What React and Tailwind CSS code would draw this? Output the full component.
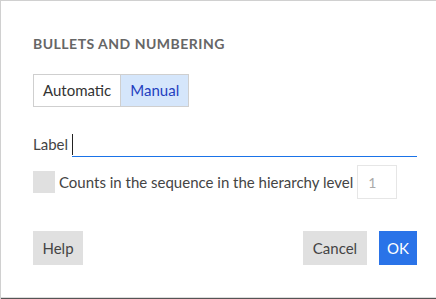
export default function App() {
  return (
    <div
      className="w-[436px] h-[299px] bg-white border-l border-t border-[#d0d0d0] overflow-hidden"
      style={{ fontFamily: 'Lato, "Noto Sans", sans-serif' }}
    >
      <div className="h-[297px] border-b border-[#dcdcdc] shadow-[0_1px_0_#555] pl-[32px] pr-[19px] flex flex-col">
        <h1 className="mt-[33px] text-[14px] leading-[20px] font-bold tracking-[0.035em] text-[#666]">
          BULLETS AND NUMBERING
        </h1>

        {/* mode toggle */}
        <div className="mt-[20px] flex self-start border border-[#cfcfcf] h-[33px] text-[15px]">
          <button className="px-[9px] text-[#333] bg-white">Automatic</button>
          <button className="px-[9px] text-[#1f3fbf] bg-[#d5e6fb] border-l border-[#cfcfcf]">Manual</button>
        </div>

        {/* label input */}
        <div className="mt-[26px] flex items-end h-[24px]">
          <span className="text-[15px] text-[#444] leading-[20px] pb-[3px] mr-[4px]">Label</span>
          <div className="flex-1 h-[24px] border-b border-[#1a73e8] flex items-stretch">
            <span className="w-px bg-[#222] my-[1px]" />
          </div>
        </div>

        {/* counts row */}
        <div className="mt-[8px] flex items-center h-[34px]">
          <span className="w-[22px] h-[22px] bg-[#e0e0e0]" />
          <span className="ml-[4px] text-[15px] text-[#444]">
            Counts in the sequence in the hierarchy level
          </span>
          <span className="ml-[4px] w-[40px] h-[34px] border border-[#e6e6e6] text-[14px] text-[#aaa] pl-[10px] flex items-center">
            1
          </span>
        </div>

        {/* buttons */}
        <div className="mt-[32px] flex items-center text-[15px]">
          <button className="h-[34px] w-[50px] bg-[#e0e0e0] text-[#444]">Help</button>
          <div className="flex-1" />
          <button className="h-[34px] w-[64px] bg-[#e0e0e0] text-[#444]">Cancel</button>
          <button className="ml-[12px] h-[34px] w-[38px] bg-[#2a73e8] text-white">OK</button>
        </div>
      </div>
    </div>
  );
}
